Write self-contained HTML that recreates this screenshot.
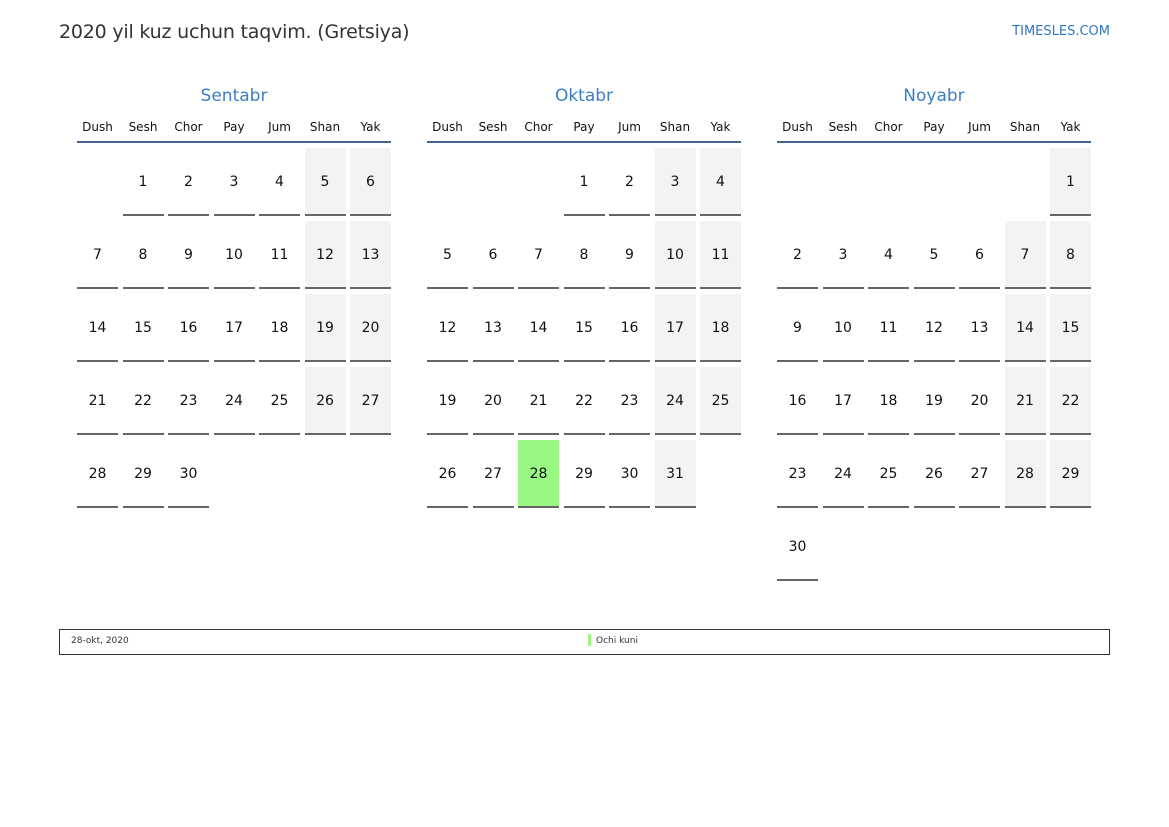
<!DOCTYPE html>
<html><head><meta charset="utf-8"><style>
*{margin:0;padding:0;box-sizing:border-box}
body{width:1169px;height:827px;background:#fff;font-family:"DejaVu Sans","Liberation Sans",sans-serif;position:relative;overflow:hidden;color:#111}
.t{position:absolute;left:59px;top:21px;font-size:19px;letter-spacing:-0.2px;color:#333}
.s{position:absolute;right:59px;top:24px;font-size:13px;color:#2f78c4}
.m{position:absolute;top:85px;width:314px}
.mn{text-align:center;font-size:17px;color:#3a7fc4;height:22px;line-height:22px}
.h{display:grid;grid-template-columns:repeat(7,41px);column-gap:4.5px;margin-top:7px;font-size:12px;height:29px;line-height:26px;text-align:center;border-bottom:2px solid #45658f;width:314px}
.g{display:grid;grid-template-columns:repeat(7,41px);column-gap:4.5px;row-gap:5px;grid-auto-rows:68px;margin-top:5px}
.g div{font-size:14px;text-align:center;line-height:68px}
.d{border-bottom:2px solid #666}
.w{background:#f3f3f3}
.c{background:#99f884}
.l{position:absolute;left:59px;top:629px;width:1051px;height:26px;border:1.5px solid #333;font-size:9px;color:#333}
</style></head><body>
<div class="t">2020 yil kuz uchun taqvim. (Gretsiya)</div>
<div class="s">TIMESLES.COM</div>

<div class="m" style="left:77px"><div class="mn">Sentabr</div>
<div class="h"><span>Dush</span><span>Sesh</span><span>Chor</span><span>Pay</span><span>Jum</span><span>Shan</span><span>Yak</span></div>
<div class="g">
<div></div><div class="d">1</div><div class="d">2</div><div class="d">3</div><div class="d">4</div><div class="d w">5</div><div class="d w">6</div>
<div class="d">7</div><div class="d">8</div><div class="d">9</div><div class="d">10</div><div class="d">11</div><div class="d w">12</div><div class="d w">13</div>
<div class="d">14</div><div class="d">15</div><div class="d">16</div><div class="d">17</div><div class="d">18</div><div class="d w">19</div><div class="d w">20</div>
<div class="d">21</div><div class="d">22</div><div class="d">23</div><div class="d">24</div><div class="d">25</div><div class="d w">26</div><div class="d w">27</div>
<div class="d">28</div><div class="d">29</div><div class="d">30</div>
</div></div>

<div class="m" style="left:427px"><div class="mn">Oktabr</div>
<div class="h"><span>Dush</span><span>Sesh</span><span>Chor</span><span>Pay</span><span>Jum</span><span>Shan</span><span>Yak</span></div>
<div class="g">
<div></div><div></div><div></div><div class="d">1</div><div class="d">2</div><div class="d w">3</div><div class="d w">4</div>
<div class="d">5</div><div class="d">6</div><div class="d">7</div><div class="d">8</div><div class="d">9</div><div class="d w">10</div><div class="d w">11</div>
<div class="d">12</div><div class="d">13</div><div class="d">14</div><div class="d">15</div><div class="d">16</div><div class="d w">17</div><div class="d w">18</div>
<div class="d">19</div><div class="d">20</div><div class="d">21</div><div class="d">22</div><div class="d">23</div><div class="d w">24</div><div class="d w">25</div>
<div class="d">26</div><div class="d">27</div><div class="d c">28</div><div class="d">29</div><div class="d">30</div><div class="d w">31</div>
</div></div>

<div class="m" style="left:777px"><div class="mn">Noyabr</div>
<div class="h"><span>Dush</span><span>Sesh</span><span>Chor</span><span>Pay</span><span>Jum</span><span>Shan</span><span>Yak</span></div>
<div class="g">
<div></div><div></div><div></div><div></div><div></div><div></div><div class="d w">1</div>
<div class="d">2</div><div class="d">3</div><div class="d">4</div><div class="d">5</div><div class="d">6</div><div class="d w">7</div><div class="d w">8</div>
<div class="d">9</div><div class="d">10</div><div class="d">11</div><div class="d">12</div><div class="d">13</div><div class="d w">14</div><div class="d w">15</div>
<div class="d">16</div><div class="d">17</div><div class="d">18</div><div class="d">19</div><div class="d">20</div><div class="d w">21</div><div class="d w">22</div>
<div class="d">23</div><div class="d">24</div><div class="d">25</div><div class="d">26</div><div class="d">27</div><div class="d w">28</div><div class="d w">29</div>
<div class="d">30</div>
</div></div>

<div class="l">
<span style="position:absolute;left:11px;top:6px;line-height:11px">28-okt, 2020</span>
<span style="position:absolute;left:528px;top:4px;width:3px;height:12px;background:#99f884"></span>
<span style="position:absolute;left:536px;top:6px;line-height:11px">Ochi kuni</span>
</div>
</body></html>
